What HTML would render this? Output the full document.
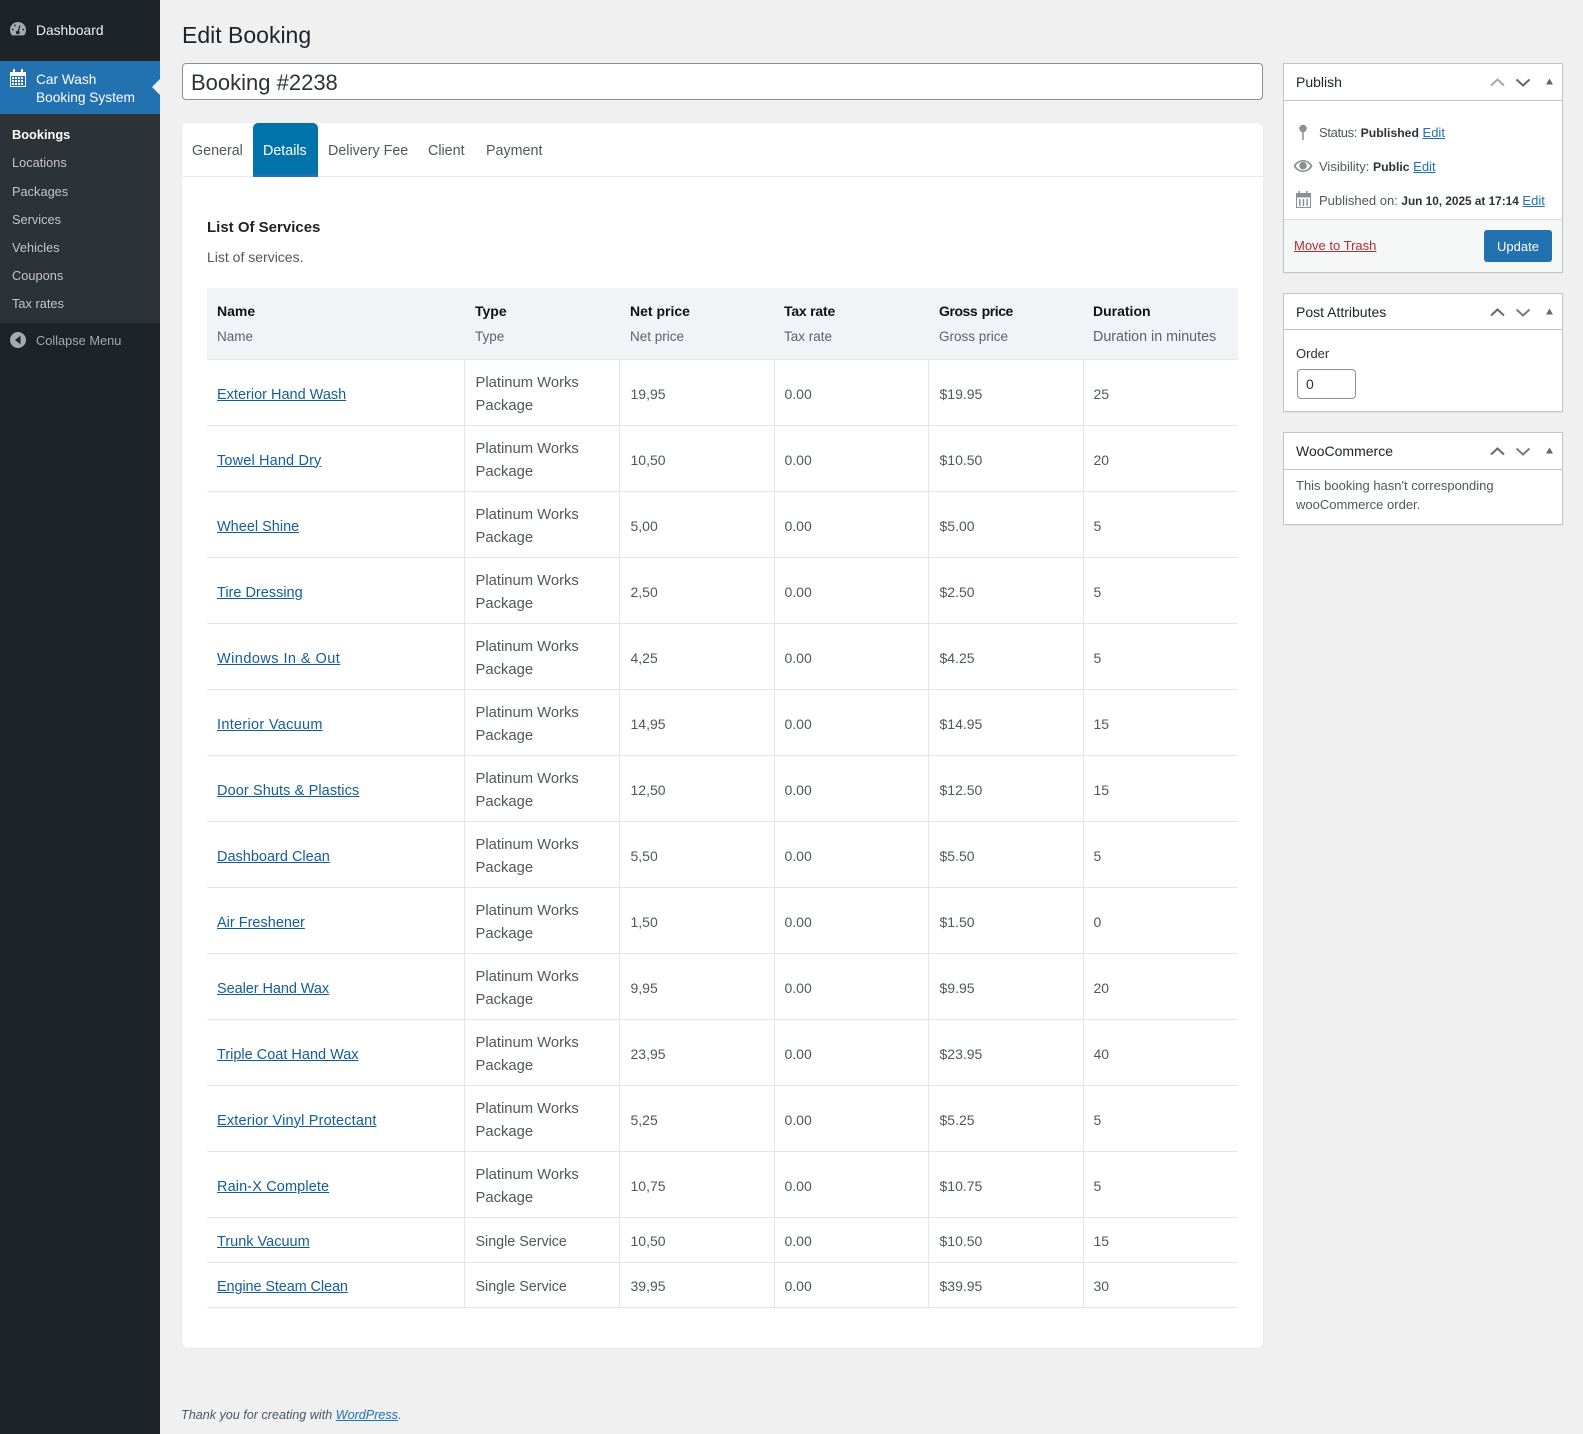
<!DOCTYPE html>
<html><head><meta charset="utf-8"><title>Edit Booking</title>
<style>
html,body{margin:0;padding:0;width:1583px;height:1434px;overflow:hidden;background:#f0f0f1;font-family:"Liberation Sans",sans-serif;color:#3c434a}
*{box-sizing:border-box}
.a{position:absolute;white-space:nowrap}
a{color:#2271b1}
#side{position:absolute;left:0;top:0;width:160px;height:1434px;background:#1d2327}
#cur{position:absolute;left:0;top:61px;width:160px;height:53px;background:#2271b1}
#sub{position:absolute;left:0;top:114px;width:160px;height:209px;background:#2c3338}
.m{position:absolute;left:12px;font-size:12.8px;line-height:18px;color:#c3c4c7}
#panel{position:absolute;left:182px;top:123px;width:1081px;height:1225px;background:#fff;border-radius:6px;box-shadow:0 0 2px rgba(0,0,0,.05)}
.tab{position:absolute;top:142px;font-size:14.3px;line-height:18px;color:#50575e}
table{position:absolute;left:207px;top:288px;width:1031px;border-collapse:collapse;table-layout:fixed;font-size:14.5px;color:#50575e}
th{background:#f2f3f7;height:71px;padding:0 0 0 10px;text-align:left;font-weight:400;border-bottom:1px solid #e4e5e9;vertical-align:top}
th b{display:block;color:#111;font-size:14px;line-height:18px;margin-top:14px}
th span{display:block;font-size:13.5px;line-height:18px;margin-top:8px;color:#5c636a}
td{padding:6px 10px 0;height:66px;line-height:23px;border-bottom:1px solid #e4e5e9;border-right:1px solid #e4e5e9}
td:last-child{border-right:0}
td:nth-child(n+3){font-size:14px;padding-top:4px}
td:nth-child(2){font-size:14.8px}
th:nth-child(2),th:nth-child(3),th:nth-child(5),td:nth-child(2),td:nth-child(3),td:nth-child(5){padding-left:11px}
tr.s td{height:45px}
tr.s td:nth-child(2){font-size:14.3px}
td a{color:#135e96}
.box{position:absolute;left:1283px;width:280px;background:#fff;border:1px solid #c3c4c7;box-shadow:0 1px 1px rgba(0,0,0,.04)}
.hd{position:absolute;left:0;right:0;top:0;border-bottom:1px solid #c3c4c7}
.ttl{position:absolute;left:12px;font-size:14px;line-height:18px;color:#1d2327}
.t13{font-size:13px;line-height:18px;color:#50575e}
.t13 b{font-weight:700;color:#2c3338;font-size:12.2px}
svg{position:absolute;display:block}
</style></head><body>
<div id="side">
<svg style="left:10px;top:22px" width="16" height="14" viewBox="0 0 16 14"><path fill="#a7aaad" d="M8 0C3.600 0 0 3.400 0 7.800c0 2.100.7 4 1.900 5.600h12.200A9 9 0 0 0 16 7.800C16 3.400 12.400 0 8 0z"/><circle cx="7.800" cy="10.500" r="1.800" fill="#1d2327"/><path stroke="#1d2327" stroke-width="1.200" d="M8 10l2-6.500"/><circle cx="2.700" cy="7.500" r=".9" fill="#1d2327"/><circle cx="5" cy="3.500" r=".9" fill="#1d2327"/><circle cx="13.300" cy="7.500" r=".9" fill="#1d2327"/></svg>
<div class="a" style="left:36px;top:22px;font-size:13.8px;line-height:18px;color:#f0f0f1">Dashboard</div>
<div id="cur"></div>
<svg style="left:10px;top:69px" width="16" height="18" viewBox="0 0 16 18"><path fill="#fff" d="M0 3h3V0h2v3h6V0h2v3h3v15H0z"/><path fill="#2271b1" d="M1 7h14v10H1z"/><path fill="#fff" d="M2 8h2v2H2zM5 8h2v2H5zM8 8h2v2H8zM11 8h2v2h-2zM2 11h2v2H2zM5 11h2v2H5zM8 11h2v2H8zM11 11h2v2h-2zM2 14h2v2H2zM5 14h2v2H5zM8 14h2v2H8zM11 14h2v2h-2z"/></svg>
<div class="a" style="left:36px;top:71px;font-size:13.7px;line-height:18px;color:#fff;white-space:normal;width:120px">Car Wash<br>Booking System</div>
<svg style="left:152px;top:79px" width="8" height="16" viewBox="0 0 8 16"><path fill="#f0f0f1" d="M8 0v16L0 8z"/></svg>
<div id="sub"></div>
<div class="m" style="top:126px;color:#fff;font-weight:700">Bookings</div>
<div class="m" style="top:154px">Locations</div>
<div class="m" style="top:183px">Packages</div>
<div class="m" style="top:211px">Services</div>
<div class="m" style="top:239px">Vehicles</div>
<div class="m" style="top:267px">Coupons</div>
<div class="m" style="top:295px">Tax rates</div>
<svg style="left:10px;top:332px" width="16" height="16" viewBox="0 0 16 16"><circle cx="8" cy="8" r="8" fill="#a7aaad"/><path fill="#1d2327" d="M10.500 3.700v8.600L5 8z"/></svg>
<div class="a" style="left:36px;top:332px;font-size:12.8px;line-height:18px;color:#a7aaad">Collapse Menu</div>
</div>

<div class="a" style="left:182px;top:21px;font-size:23px;line-height:28px;color:#1d2327">Edit Booking</div>
<div class="a" style="left:182px;top:63px;width:1081px;height:37px;background:#fff;border:1px solid #8c8f94;border-radius:4px;padding-left:8px;font-size:22px;line-height:38px;color:#2c3338">Booking #2238</div>

<div id="panel"></div>
<div class="a" style="left:182px;top:176px;width:1081px;height:1px;background:#e9e9ee"></div>
<div class="a" style="left:253px;top:123px;width:65px;height:54px;background:#0073aa;border-radius:5px 5px 0 0;border-bottom:3px solid #2271b1"></div>
<div class="tab" style="left:192px">General</div>
<div class="tab" style="left:263px;color:#fff">Details</div>
<div class="tab" style="left:328px">Delivery Fee</div>
<div class="tab" style="left:428px">Client</div>
<div class="tab" style="left:486px">Payment</div>
<div class="a" style="left:207px;top:218px;font-size:15px;line-height:19px;font-weight:700;color:#1d2327">List Of Services</div>
<div class="a" style="left:207px;top:248px;font-size:14px;line-height:18px;color:#50575e">List of services.</div>

<table>
<colgroup><col style="width:257px"><col style="width:155px"><col style="width:155px"><col style="width:154px"><col style="width:155px"><col style="width:155px"></colgroup>
<tr><th><b>Name</b><span>Name</span></th><th><b>Type</b><span>Type</span></th><th><b>Net price</b><span>Net price</span></th><th><b style="letter-spacing:-.2px">Tax rate</b><span>Tax rate</span></th><th><b style="letter-spacing:-.45px;word-spacing:1px">Gross price</b><span>Gross price</span></th><th><b>Duration</b><span style="font-size:14.3px">Duration in minutes</span></th></tr>
<tr><td><a href="#">Exterior Hand Wash</a></td><td>Platinum Works Package</td><td>19,95</td><td>0.00</td><td>$19.95</td><td>25</td></tr>
<tr><td><a href="#" style="letter-spacing:.15px">Towel Hand Dry</a></td><td>Platinum Works Package</td><td>10,50</td><td>0.00</td><td>$10.50</td><td>20</td></tr>
<tr><td><a href="#">Wheel Shine</a></td><td>Platinum Works Package</td><td>5,00</td><td>0.00</td><td>$5.00</td><td>5</td></tr>
<tr><td><a href="#">Tire Dressing</a></td><td>Platinum Works Package</td><td>2,50</td><td>0.00</td><td>$2.50</td><td>5</td></tr>
<tr><td><a href="#" style="letter-spacing:.45px">Windows In &amp; Out</a></td><td>Platinum Works Package</td><td>4,25</td><td>0.00</td><td>$4.25</td><td>5</td></tr>
<tr><td><a href="#" style="letter-spacing:.3px">Interior Vacuum</a></td><td>Platinum Works Package</td><td>14,95</td><td>0.00</td><td>$14.95</td><td>15</td></tr>
<tr><td><a href="#" style="letter-spacing:.1px">Door Shuts &amp; Plastics</a></td><td>Platinum Works Package</td><td>12,50</td><td>0.00</td><td>$12.50</td><td>15</td></tr>
<tr><td><a href="#">Dashboard Clean</a></td><td>Platinum Works Package</td><td>5,50</td><td>0.00</td><td>$5.50</td><td>5</td></tr>
<tr><td><a href="#">Air Freshener</a></td><td>Platinum Works Package</td><td>1,50</td><td>0.00</td><td>$1.50</td><td>0</td></tr>
<tr><td><a href="#" style="letter-spacing:-.07px">Sealer Hand Wax</a></td><td>Platinum Works Package</td><td>9,95</td><td>0.00</td><td>$9.95</td><td>20</td></tr>
<tr><td><a href="#">Triple Coat Hand Wax</a></td><td>Platinum Works Package</td><td>23,95</td><td>0.00</td><td>$23.95</td><td>40</td></tr>
<tr><td><a href="#" style="letter-spacing:.17px">Exterior Vinyl Protectant</a></td><td>Platinum Works Package</td><td>5,25</td><td>0.00</td><td>$5.25</td><td>5</td></tr>
<tr><td><a href="#" style="letter-spacing:.12px">Rain-X Complete</a></td><td>Platinum Works Package</td><td>10,75</td><td>0.00</td><td>$10.75</td><td>5</td></tr>
<tr class="s"><td><a href="#">Trunk Vacuum</a></td><td>Single Service</td><td>10,50</td><td>0.00</td><td>$10.50</td><td>15</td></tr>
<tr class="s"><td><a href="#" style="letter-spacing:-.12px">Engine Steam Clean</a></td><td>Single Service</td><td>39,95</td><td>0.00</td><td>$39.95</td><td>30</td></tr>
</table>

<div class="a" style="left:181px;top:1406px;font-size:12.6px;line-height:18px;font-style:italic;color:#50575e">Thank you for creating with <a href="#">WordPress</a>.</div>

<!-- Publish -->
<div class="box" style="top:63px;height:210px">
<div class="hd" style="height:37px"></div>
<div class="ttl" style="top:9px">Publish</div>
<svg style="left:204px;top:12px" width="68" height="14" viewBox="0 0 68 14"><path fill="none" stroke="#a7aaad" stroke-width="2" d="M3 9.500L9.500 3.500l6.500 6"/><path fill="none" stroke="#646970" stroke-width="2" d="M28.500 3.500L35 9.500l6.500-6"/><path fill="#646970" d="M58 8.500l3.500-6 3.500 6z"/></svg>
<svg style="left:13px;top:60px" width="14" height="16" viewBox="0 0 14 16"><circle cx="6" cy="4.500" r="3.800" fill="#8c8f94"/><path stroke="#8c8f94" stroke-width="1.500" d="M6 8v8"/></svg>
<div class="a t13" style="left:35px;top:60px"><span style="letter-spacing:-.35px">Status:</span> <b>Published</b> <a href="#">Edit</a></div>
<svg style="left:9px;top:95px" width="20" height="14" viewBox="0 0 20 14"><path fill="#8c8f94" d="M10 1C5.500 1 2 4 .5 7 2 10 5.500 13 10 13s8-3 9.500-6C18 4 14.500 1 10 1zm0 10.500C6.500 11.500 4 9.300 2.600 7 4 4.700 6.500 2.500 10 2.500S16 4.700 17.400 7C16 9.300 13.500 11.500 10 11.500z"/><circle cx="10" cy="6.700" r="3.800" fill="#8c8f94"/></svg>
<div class="a t13" style="left:35px;top:94px">Visibility: <b>Public</b> <a href="#">Edit</a></div>
<svg style="left:11px;top:126px" width="17" height="18" viewBox="0 0 17 18"><path fill="#8c8f94" d="M1 3h2.500V1h1.500v2h6V1h1.500v2H16v15H1V3zm1 4.500V17h13V7.500z"/><path fill="#8c8f94" d="M4 9h1.500v7H4zM7.700 9h1.500v7H7.700zM11.400 9h1.500v7h-1.500z"/></svg>
<div class="a t13" style="left:35px;top:128px">Published on: <b style="font-size:11.8px">Jun 10, 2025 at 17:14</b> <a href="#">Edit</a></div>
<div class="a" style="left:0;top:155px;width:278px;height:53px;background:#f6f7f7;border-top:1px solid #dcdcde"></div>
<a class="a" href="#" style="left:10px;top:173px;font-size:13px;line-height:18px;color:#b32d2e">Move to Trash</a>
<div class="a" style="left:200px;top:166px;width:68px;height:32px;background:#2271b1;border-radius:3px;color:#fff;font-size:13px;line-height:33px;text-align:center">Update</div>
</div>

<!-- Post Attributes -->
<div class="box" style="top:293px;height:119px">
<div class="hd" style="height:36px"></div>
<div class="ttl" style="top:9px">Post Attributes</div>
<svg style="left:204px;top:12px" width="68" height="14" viewBox="0 0 68 14"><path fill="none" stroke="#646970" stroke-width="2" d="M3 9.500L9.500 3.500l6.500 6"/><path fill="none" stroke="#787c82" stroke-width="2" d="M28.500 3.500L35 9.500l6.500-6"/><path fill="#646970" d="M58 8.500l3.500-6 3.500 6z"/></svg>
<div class="a t13" style="left:12px;top:51px;color:#2c3338">Order</div>
<div class="a" style="left:13px;top:75px;width:59px;height:30px;border:1px solid #8c8f94;border-radius:4px;padding-left:8px;font-size:14px;line-height:29px;color:#2c3338">0</div>
</div>

<!-- WooCommerce -->
<div class="box" style="top:432px;height:93px">
<div class="hd" style="height:37px"></div>
<div class="ttl" style="top:9px">WooCommerce</div>
<svg style="left:204px;top:12px" width="68" height="14" viewBox="0 0 68 14"><path fill="none" stroke="#646970" stroke-width="2" d="M3 9.500L9.500 3.500l6.500 6"/><path fill="none" stroke="#787c82" stroke-width="2" d="M28.500 3.500L35 9.500l6.500-6"/><path fill="#646970" d="M58 8.500l3.500-6 3.500 6z"/></svg>
<div class="a t13" style="left:12px;top:43px;line-height:19px;white-space:normal;width:255px">This booking hasn't corresponding wooCommerce order.</div>
</div>
</body></html>
